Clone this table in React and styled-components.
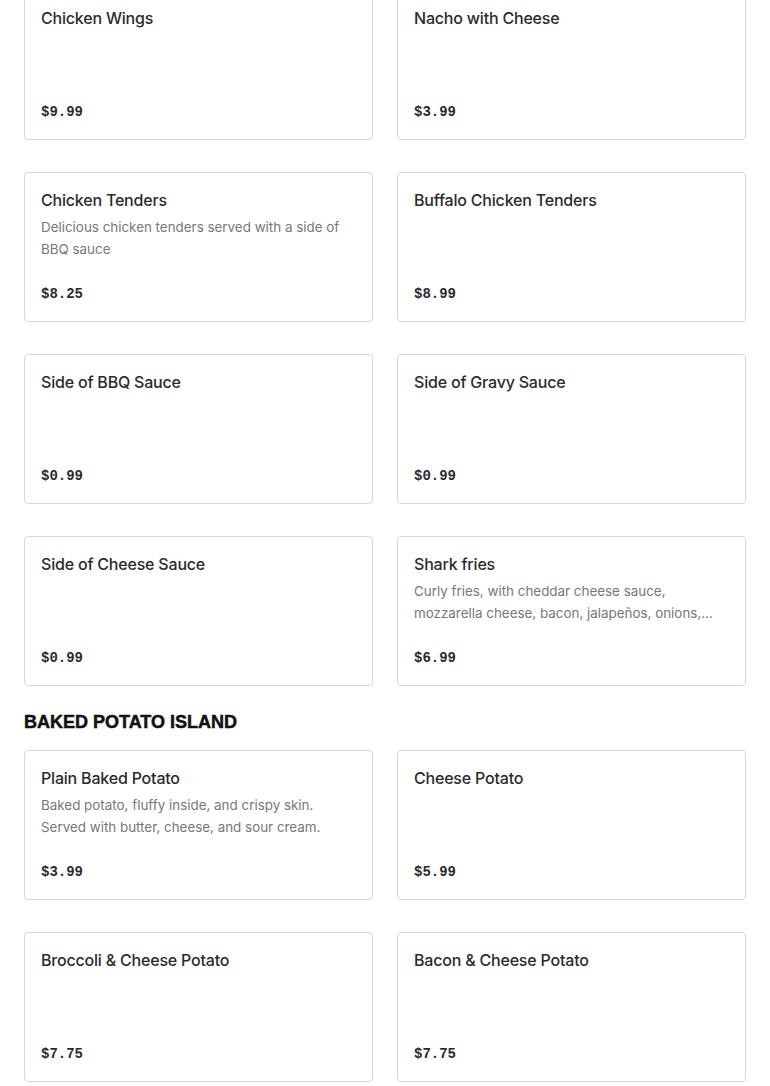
import React from 'react';
import styled, { createGlobalStyle } from 'styled-components';

const GlobalStyle = createGlobalStyle`
  html, body {
    margin: 0;
    padding: 0;
    background: #ffffff;
  }
  body {
    font-family: Inter, "Liberation Sans", sans-serif;
    color: #2d2d2d;
    overflow: hidden;
  }
`;

const Page = styled.div`
  width: 770px;
  box-sizing: border-box;
  padding: 0 24px;
  margin-top: -10px;
`;

const Section = styled.section`
  display: flex;
  flex-direction: column;
`;

const SectionTitle = styled.h2`
  margin: 24px 0 16px;
  font-family: "Liberation Sans", Arial, sans-serif;
  font-size: 18px;
  line-height: 24px;
  font-weight: 900;
  text-transform: uppercase;
  color: #111111;
  -webkit-text-stroke: 0.5px #111111;
`;

const Grid = styled.div`
  display: grid;
  grid-template-columns: 1fr 1fr;
  column-gap: 24px;
  row-gap: 32px;
`;

const Card = styled.div`
  box-sizing: border-box;
  height: 150px;
  padding: 16px;
  border: 1px solid #d6d6d6;
  border-radius: 4px;
  display: flex;
  flex-direction: column;
  background: #fff;
`;

const Name = styled.div`
  margin-top: -1px;
  font-size: 16px;
  line-height: 24px;
  font-weight: 500;
  letter-spacing: -0.2px;
  color: #2b2b2b;
`;

const Description = styled.div`
  margin-top: 4px;
  padding-right: 10px;
  font-size: 13.4px;
  line-height: 22px;
  color: #777777;
  display: -webkit-box;
  -webkit-line-clamp: 2;
  -webkit-box-orient: vertical;
  overflow: hidden;
`;

const Price = styled.div`
  margin-top: auto;
  font-family: "Liberation Mono", "DejaVu Sans Mono", monospace;
  font-size: 14px;
  line-height: 22px;
  font-weight: 700;
  color: #2b2b2b;
`;

const snacks = [
  { name: 'Chicken Wings', price: '$9.99' },
  { name: 'Nacho with Cheese', price: '$3.99' },
  { name: 'Chicken Tenders', desc: 'Delicious chicken tenders served with a side of BBQ sauce', price: '$8.25' },
  { name: 'Buffalo Chicken Tenders', price: '$8.99' },
  { name: 'Side of BBQ Sauce', price: '$0.99' },
  { name: 'Side of Gravy Sauce', price: '$0.99' },
  { name: 'Side of Cheese Sauce', price: '$0.99' },
  { name: 'Shark fries', desc: 'Curly fries, with cheddar cheese sauce, mozzarella cheese, bacon, jalapeños, onions, and sour cream.', price: '$6.99' },
];

const potatoes = [
  { name: 'Plain Baked Potato', desc: 'Baked potato, fluffy inside, and crispy skin. Served with butter, cheese, and sour cream.', price: '$3.99' },
  { name: 'Cheese Potato', price: '$5.99' },
  { name: 'Broccoli & Cheese Potato', price: '$7.75' },
  { name: 'Bacon & Cheese Potato', price: '$7.75' },
];

const MenuGrid = ({ items }) => (
  <Grid>
    {items.map((item, i) => (
      <Card key={i}>
        <Name>{item.name}</Name>
        {item.desc && <Description>{item.desc}</Description>}
        <Price>{item.price}</Price>
      </Card>
    ))}
  </Grid>
);

const App = () => (
  <>
    <GlobalStyle />
    <Page>
      <Section>
        <MenuGrid items={snacks} />
      </Section>
      <Section>
        <SectionTitle>Baked Potato Island</SectionTitle>
        <MenuGrid items={potatoes} />
      </Section>
    </Page>
  </>
);

export default App;
